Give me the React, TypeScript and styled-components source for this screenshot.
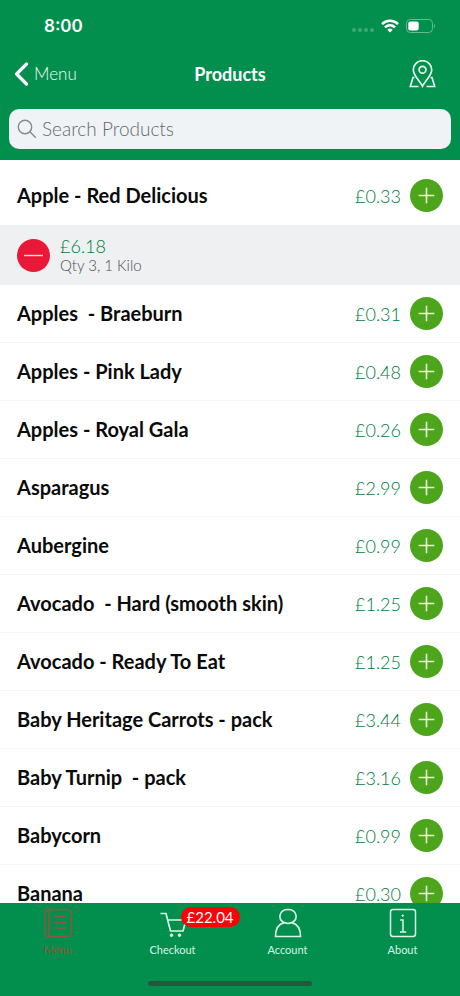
import React from "react";
import styled, { createGlobalStyle } from "styled-components";

const GlobalStyle = createGlobalStyle`
  *, *::before, *::after { box-sizing: border-box; }
  html, body { margin: 0; padding: 0; }
  body { background: #fff; font-family: Lato, "Open Sans", sans-serif; color: #0a0a0a; }
  button, input { font: inherit; color: inherit; }
`;

const green = "#028f4e";

const Screen = styled.div`
  display: flex;
  flex-direction: column;
  height: 100vh;
  overflow: hidden;
`;

const Header = styled.header`
  flex: none;
  background: ${green};
  color: #fff;
  padding-bottom: 11px;
`;

const StatusBar = styled.div`
  display: flex;
  align-items: center;
  justify-content: space-between;
  height: 51px;
  padding: 0 24px 0 44px;
`;

const Clock = styled.time`
  font: 600 17px/24px Inter, sans-serif;
`;

const StatusIcons = styled.div`
  display: flex;
  align-items: center;
  gap: 7px;
`;

const Dots = styled.div`
  display: flex;
  gap: 2px;
  padding-top: 8px;
`;

const Dot = styled.i`
  width: 4px;
  height: 4px;
  border-radius: 50%;
  background: #41a777;
`;

const NavBar = styled.nav`
  display: grid;
  grid-template-columns: 1fr auto 1fr;
  align-items: center;
  height: 46px;
  padding: 0 24px;
`;

const BackButton = styled.button`
  display: flex;
  align-items: center;
  justify-self: start;
  gap: 5px;
  margin-left: -10px;
  padding: 0;
  border: 0;
  background: none;
  font-size: 17px;
  line-height: 24px;
  font-weight: 300;
  color: #f0fdf7;
  cursor: pointer;
`;

const Title = styled.h1`
  margin: 0;
  font-size: 18px;
  line-height: 24px;
  font-weight: 700;
`;

const MapButton = styled.button`
  display: flex;
  justify-self: end;
  padding: 0;
  border: 0;
  background: none;
  cursor: pointer;
`;

const SearchBox = styled.label`
  display: flex;
  align-items: center;
  gap: 5px;
  height: 40px;
  margin: 12px 9px 0;
  padding: 0 8px;
  border-radius: 10px;
  background: #eff3f6;
  color: #85898c;
`;

const SearchInput = styled.input`
  flex: 1;
  min-width: 0;
  padding: 0;
  border: 0;
  outline: 0;
  background: none;
  font-size: 19px;
  line-height: 24px;
  font-weight: 300;
  &::placeholder { color: #65696d; opacity: 1; }
`;

const List = styled.ul`
  flex: 1;
  min-height: 0;
  margin: 0;
  padding: 7px 0 0;
  list-style: none;
  overflow-y: auto;
  scrollbar-width: none;
`;

const Row = styled.div<{ $last?: boolean }>`
  display: flex;
  align-items: center;
  gap: 9px;
  height: 58px;
  padding: 0 17px;
  border-bottom: 1px solid ${(p) => (p.$last ? "transparent" : "#f3f4f4")};
`;

const Name = styled.span`
  flex: 1;
  padding-bottom: 2px;
  font-size: 20px;
  line-height: 24px;
  font-weight: 700;
  white-space: pre;
`;

const Price = styled.span`
  font-size: 18px;
  line-height: 24px;
  font-weight: 300;
  color: #007a40;
`;

const RoundButton = styled.button<{ $color: string }>`
  display: flex;
  flex: none;
  width: 33px;
  height: 33px;
  padding: 0;
  border: 0;
  border-radius: 50%;
  background: ${(p) => p.$color};
  cursor: pointer;
`;

const BasketRow = styled.div`
  display: flex;
  align-items: center;
  gap: 10px;
  height: 60px;
  padding: 0 17px;
  background: #eef0f1;
`;

const BasketText = styled.div`
  display: flex;
  flex-direction: column;
`;

const BasketTotal = styled(Price)`
  line-height: 20px;
`;

const BasketQty = styled.span`
  font-size: 15px;
  line-height: 18px;
  font-weight: 300;
  color: #4c4f51;
`;

const Footer = styled.footer`
  flex: none;
  background: ${green};
  padding-bottom: 10px;
`;

const Tabs = styled.nav`
  display: grid;
  grid-template-columns: repeat(4, 1fr);
  height: 78px;
`;

const Tab = styled.a<{ $active?: boolean }>`
  display: flex;
  flex-direction: column;
  align-items: center;
  gap: 4px;
  padding-top: 5px;
  font-size: 11px;
  line-height: 16px;
  text-decoration: none;
  color: ${(p) => (p.$active ? "#8a5736" : "#d8f5e6")};
`;

const IconWrap = styled.span`
  position: relative;
  display: flex;
`;

const Badge = styled.span`
  position: absolute;
  left: 23px;
  top: -1px;
  padding: 0 6px;
  border-radius: 10px;
  background: #fb0207;
  color: #fff;
  font-size: 15px;
  line-height: 20px;
`;

const HomeIndicator = styled.div`
  width: 164px;
  height: 5px;
  margin: 0 auto;
  border-radius: 3px;
  background: #23583c;
`;

const WifiIcon = () => (
  <svg width="18" height="14" viewBox="0 0 18 14" fill="none" stroke="#fff" strokeWidth="2.5">
    <path d="M1 5.1a11.4 11.4 0 0 1 16 0" />
    <path d="M4 8.4a7.1 7.1 0 0 1 10 0" />
    <path d="M9 13.4 6.3 10.7a3.9 3.9 0 0 1 5.4 0Z" fill="#fff" stroke="none" />
  </svg>
);

const BatteryIcon = () => (
  <svg width="30" height="14" viewBox="0 0 30 14">
    <rect x=".5" y=".5" width="26" height="13" rx="3.8" fill="none" stroke="#67ba91" />
    <rect x="2.3" y="2.4" width="10.4" height="9.2" rx="2" fill="#fff" />
    <path d="M28 4.8c1.5.7 1.5 3.7 0 4.4Z" fill="#67ba91" />
  </svg>
);

const BackIcon = () => (
  <svg width="15" height="24" viewBox="0 0 15 24" fill="none" stroke="#fff" strokeWidth="3.2" strokeLinecap="round" strokeLinejoin="round">
    <path d="M12.5 2 2.6 12l9.9 10" />
  </svg>
);

const MapPinIcon = () => (
  <svg width="27" height="28" viewBox="0 0 27 28" fill="none" stroke="#e4faef" strokeWidth="1.7">
    <path d="M13.5 26C11 21 4.3 15.5 4.3 9.9a9.2 9.2 0 0 1 18.4 0C22.7 15.5 16 21 13.5 26Z" />
    <circle cx="13.5" cy="9.8" r="3.4" />
    <path d="M5.5 17.5H4l-2.7 9h8.2M21.5 17.5H23l2.7 9h-8.2" />
  </svg>
);

const SearchIcon = () => (
  <svg width="20" height="20" viewBox="0 0 20 20" fill="none" stroke="currentColor" strokeWidth="1.4">
    <circle cx="8" cy="8" r="6.7" />
    <path d="m12.8 12.8 6 6" />
  </svg>
);

const PlusIcon = () => (
  <svg width="33" height="33" viewBox="0 0 33 33" stroke="#e9f7dc" strokeWidth="1.6">
    <path d="M8.7 16.5h15.6M16.5 8.7v15.6" />
  </svg>
);

const MinusIcon = () => (
  <svg width="33" height="33" viewBox="0 0 33 33" stroke="#ffdce2" strokeWidth="1.4">
    <path d="M7 16.5h19" />
  </svg>
);

const MenuIcon = () => (
  <svg width="30" height="30" viewBox="0 0 30 30" fill="none" stroke="#95543a" strokeWidth="1.4">
    <rect x="2" y="1.5" width="26" height="27" rx="3" />
    <path d="M6 1.5v27M11 8.5h12.5M11 14.5h12.5M11 20h12.5" />
  </svg>
);

const CartIcon = () => (
  <svg width="30" height="30" viewBox="0 0 30 30" fill="none" stroke="#dcf7e9" strokeWidth="1.7">
    <path d="M2.5 5.5H8l4.500 17.500h12.500L28 12H10" />
    <circle cx="13.5" cy="27.2" r="1.3" fill="#dcf7e9" strokeWidth="1" />
    <circle cx="21.5" cy="27.2" r="1.3" fill="#dcf7e9" strokeWidth="1" />
  </svg>
);

const AccountIcon = () => (
  <svg width="30" height="30" viewBox="0 0 30 30" fill="none" stroke="#dcf7e9" strokeWidth="1.6">
    <path d="M11.3 14.6C3.800 11 6.500 1.500 15 1.500s11.200 9.500 3.700 13.100C24.500 16 27.500 20 27.500 28.500h-25C2.500 20 5.500 16 11.300 14.600c2.400 1.100 5 1.100 7.400 0" />
  </svg>
);

const AboutIcon = () => (
  <svg width="30" height="30" viewBox="0 0 30 30" fill="none" stroke="#dcf7e9" strokeWidth="1.5">
    <rect x="2.5" y="1.5" width="25" height="27" rx="2.5" />
    <path d="M12.2 12H15v12M12 24h6.200" />
    <circle cx="14.7" cy="7.6" r=".8" fill="#dcf7e9" strokeWidth=".8" />
  </svg>
);

type Product = { name: string; price: string; basket?: { total: string; qty: string } };

const products: Product[] = [
  { name: "Apple - Red Delicious", price: "£0.33", basket: { total: "£6.18", qty: "Qty 3, 1 Kilo" } },
  { name: "Apples  - Braeburn", price: "£0.31" },
  { name: "Apples - Pink Lady", price: "£0.48" },
  { name: "Apples - Royal Gala", price: "£0.26" },
  { name: "Asparagus", price: "£2.99" },
  { name: "Aubergine", price: "£0.99" },
  { name: "Avocado  - Hard (smooth skin)", price: "£1.25" },
  { name: "Avocado - Ready To Eat", price: "£1.25" },
  { name: "Baby Heritage Carrots - pack", price: "£3.44" },
  { name: "Baby Turnip  - pack", price: "£3.16" },
  { name: "Babycorn", price: "£0.99" },
  { name: "Banana", price: "£0.30" },
];

const tabs = [
  { label: "Menu", Icon: MenuIcon, active: true },
  { label: "Checkout", Icon: CartIcon, badge: "£22.04" },
  { label: "Account", Icon: AccountIcon },
  { label: "About", Icon: AboutIcon },
];

export default function App() {
  return (
    <Screen>
      <GlobalStyle />
      <Header>
        <StatusBar>
          <Clock>8:00</Clock>
          <StatusIcons>
            <Dots><Dot /><Dot /><Dot /><Dot /></Dots>
            <WifiIcon />
            <BatteryIcon />
          </StatusIcons>
        </StatusBar>
        <NavBar>
          <BackButton type="button"><BackIcon />Menu</BackButton>
          <Title>Products</Title>
          <MapButton type="button" aria-label="Store map"><MapPinIcon /></MapButton>
        </NavBar>
        <SearchBox>
          <SearchIcon />
          <SearchInput type="text" placeholder="Search Products" aria-label="Search Products" />
        </SearchBox>
      </Header>
      <List>
        {products.map((p) => (
          <li key={p.name}>
            <Row $last={!!p.basket}>
              <Name>{p.name}</Name>
              <Price>{p.price}</Price>
              <RoundButton type="button" $color="#4ca51b" aria-label={`Add ${p.name}`}><PlusIcon /></RoundButton>
            </Row>
            {p.basket && (
              <BasketRow>
                <RoundButton type="button" $color="#ea1837" aria-label={`Remove ${p.name}`}><MinusIcon /></RoundButton>
                <BasketText>
                  <BasketTotal>{p.basket.total}</BasketTotal>
                  <BasketQty>{p.basket.qty}</BasketQty>
                </BasketText>
              </BasketRow>
            )}
          </li>
        ))}
      </List>
      <Footer>
        <Tabs>
          {tabs.map(({ label, Icon, active, badge }) => (
            <Tab key={label} href={`#${label.toLowerCase()}`} $active={active}>
              <IconWrap><Icon />{badge && <Badge>{badge}</Badge>}</IconWrap>
              {label}
            </Tab>
          ))}
        </Tabs>
        <HomeIndicator />
      </Footer>
    </Screen>
  );
}
